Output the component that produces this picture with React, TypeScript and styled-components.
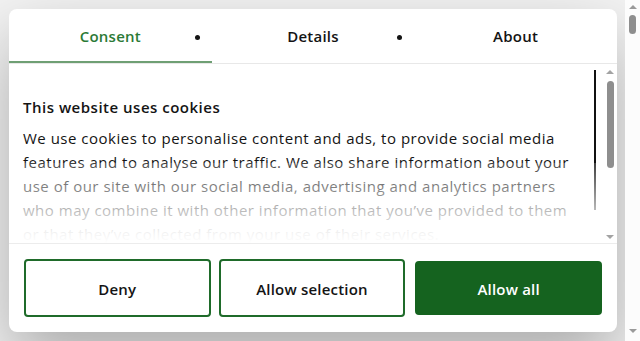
import React from "react";
import styled, { createGlobalStyle } from "styled-components";

const Global = createGlobalStyle`
  html, body { margin: 0; padding: 0; height: 100%; overflow: hidden; background: #fff; }
  body { font-family: "Open Sans", "Noto Sans", sans-serif; color: #141414; }
`;

const GREEN = "#1f6b2a";

const Page = styled.div`
  display: flex;
  width: 640px;
  height: 341px;
`;

const Main = styled.div`
  flex: 1;
  display: flex;
  padding: 9px 8px 9px 9px;
  background: #f3f3f3;
`;

const Card = styled.div`
  width: 608px;
  height: 323px;
  background: #fff;
  border-radius: 8px;
  box-shadow: 0 30px 70px rgba(0, 0, 0, 0.3);
  display: flex;
  flex-direction: column;
  overflow: hidden;
`;

const Tabs = styled.nav`
  display: grid;
  grid-template-columns: repeat(3, 1fr);
  height: 54px;
  border-bottom: 1px solid #e8e8e8;
`;

const Tab = styled.div<{ $active?: boolean; $dot?: boolean }>`
  position: relative;
  display: flex;
  align-items: center;
  justify-content: center;
  font-size: 15px;
  font-weight: 600;
  letter-spacing: 0.25px;
  color: ${(p) => (p.$active ? "#2b7a36" : "#141414")};
  border-bottom: 2px solid ${(p) => (p.$active ? "#6f9f74" : "transparent")};
  padding-top: 2px;
  &::after {
    content: "";
    display: ${(p) => (p.$dot ? "block" : "none")};
    position: absolute;
    right: 12px;
    top: 26px;
    width: 5px;
    height: 5px;
    border-radius: 50%;
    background: #141414;
  }
`;

const Body = styled.div`
  height: 179px;
  display: flex;
  border-bottom: 1px solid #ececec;
`;

const ScrollArea = styled.div`
  position: relative;
  flex: 1;
  overflow: hidden;
`;

const Text = styled.div`
  padding: 31px 20px 0 14px;
`;

const Title = styled.h2`
  margin: 0 0 7px;
  font-size: 15px;
  font-weight: 600;
  line-height: 24px;
  letter-spacing: 0.5px;
`;

const Para = styled.p`
  margin: 0;
  font-size: 15px;
  font-weight: 400;
  line-height: 24px;
  letter-spacing: 0.5px;
`;

const FocusEdge = styled.div`
  position: absolute;
  right: 7px;
  top: 6px;
  width: 2px;
  height: 140px;
  background: #111;
`;

const Fade = styled.div`
  position: absolute;
  left: 0;
  right: 0;
  bottom: 0;
  height: 80px;
  background: linear-gradient(180deg, rgba(255, 255, 255, 0.2) 0%, rgba(255, 255, 255, 0.95) 88%, #fff 100%);
`;

const InnerBar = styled.div`
  width: 14px;
  display: flex;
  flex-direction: column;
  align-items: center;
  padding: 6px 0 4px;
`;

const Arrow = styled.div<{ $down?: boolean; $c?: string }>`
  width: 0;
  height: 0;
  border-left: 4px solid transparent;
  border-right: 4px solid transparent;
  ${(p) =>
    p.$down
      ? `border-top: 4px solid ${p.$c || "#a3a3a3"};`
      : `border-bottom: 4px solid ${p.$c || "#a3a3a3"};`}
`;

const Thumb = styled.div<{ $h: number; $mt: number }>`
  width: 7px;
  height: ${(p) => p.$h}px;
  margin-top: ${(p) => p.$mt}px;
  border-radius: 4px;
  background: #8e8e8e;
`;

const Spacer = styled.div`
  flex: 1;
`;

const Footer = styled.div`
  flex: 1;
  display: flex;
  gap: 8px;
  padding: 15px 13px 15px 15px;
`;

const Btn = styled.button<{ $primary?: boolean }>`
  flex: 1;
  min-width: 0;
  font-family: inherit;
  font-size: 15px;
  font-weight: 600;
  letter-spacing: 0.2px;
  border-radius: 4px;
  cursor: pointer;
  border: 2px solid ${GREEN};
  background: #fff;
  color: #141414;
  padding-top: 2px;
  ${(p) =>
    p.$primary &&
    `
    background: #15631f;
    border-color: #15631f;
    color: #fff;
    margin: 2px;
  `}
`;

const PageBar = styled.div`
  width: 15px;
  background: #fcfcfc;
  display: flex;
  flex-direction: column;
  align-items: center;
  padding: 5px 0 8px;
  box-sizing: border-box;
`;

export default function App() {
  return (
    <>
      <Global />
      <Page>
        <Main>
          <Card>
            <Tabs>
              <Tab $active $dot>Consent</Tab>
              <Tab $dot>Details</Tab>
              <Tab>About</Tab>
            </Tabs>
            <Body>
              <ScrollArea>
                <Text>
                  <Title>This website uses cookies</Title>
                  <Para>
                    We use cookies to personalise content and ads, to provide social media
                    features and to analyse our traffic. We also share information about your
                    use of our site with our social media, advertising and analytics partners
                    who may combine it with other information that you’ve provided to them
                    or that they’ve collected from your use of their services.
                  </Para>
                </Text>
                <FocusEdge />
                <Fade />
              </ScrollArea>
              <InnerBar>
                <Arrow />
                <Thumb $h={87} $mt={7} />
                <Spacer />
                <Arrow $down />
              </InnerBar>
            </Body>
            <Footer>
              <Btn>Deny</Btn>
              <Btn>Allow selection</Btn>
              <Btn $primary>Allow all</Btn>
            </Footer>
          </Card>
        </Main>
        <PageBar>
          <Arrow $c="#9a9a9a" />
          <Thumb $h={19} $mt={6} />
          <Spacer />
          <Arrow $down $c="#9a9a9a" />
        </PageBar>
      </Page>
    </>
  );
}
